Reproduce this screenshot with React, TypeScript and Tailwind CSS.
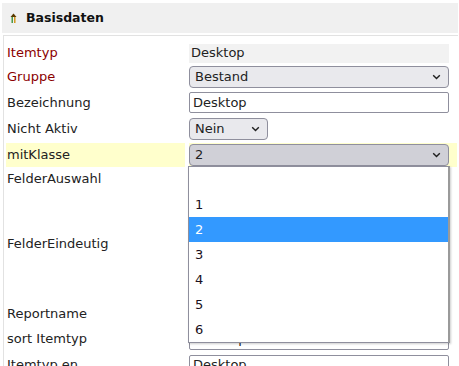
import React from "react";

const labelCls = "pl-[1px] text-[#222]";
const reqCls = "pl-[1px] text-[#8b0000]";

function Chevron() {
  return (
    <svg width="9" height="6" viewBox="0 0 9 6" className="shrink-0">
      <path d="M1.2 1.2l3.3 3.3 3.3-3.3" fill="none" stroke="#1f1f1f" strokeWidth="1.4" />
    </svg>
  );
}

function Select({ value, width, open }: { value: string; width: string; open?: boolean }) {
  return (
    <div
      className={`flex h-[22px] items-center justify-between rounded-[4px] border border-[#8f8f9d] pl-[5px] pr-[7px] ${width} ${
        open ? "bg-[#d0d0d7]" : "bg-[#e9e9ed]"
      }`}
    >
      <span>{value}</span>
      <Chevron />
    </div>
  );
}

function Input({ value }: { value: string }) {
  return (
    <div className="flex h-[21px] w-[260px] items-center rounded-[2px] border border-[#8f8f9d] bg-white pl-[3px]">
      {value}
    </div>
  );
}

const options = ["", "1", "2", "3", "4", "5", "6"];

export default function App() {
  return (
    <div className="relative h-[366px] w-[459px] overflow-hidden bg-white font-['DejaVu_Sans',sans-serif] text-[13px] leading-[16px] text-[#222]">
      <div className="pl-[2px] pr-[1px] pt-[3px]">
        <div className="flex h-[30px] items-center bg-[#f0f0f0] pl-[8px]">
          <svg width="7" height="10" viewBox="0 0 7 10" className="mr-[9px]">
            <path d="M3.5 0.5L0.5 4h6z" fill="#5a3a00" />
            <path d="M2.2 4v6" stroke="#2e8b2e" strokeWidth="1.3" />
            <path d="M4.8 4v6" stroke="#d08a00" strokeWidth="1.3" />
          </svg>
          <span className="text-[12.5px] font-bold text-[#111]">Basisdaten</span>
        </div>

        <div className="ml-px mt-[2px] border-l border-t border-[#e2e2e2] pl-[2px] pt-[6px]">
          <div className="grid grid-cols-[179px_268px] gap-x-[4px] gap-y-[2px]">
            <div className={`flex h-[22px] items-center ${reqCls}`}>Itemtyp</div>
            <div className="flex items-center">
              <div className="flex h-[19px] w-[260px] items-center bg-[#f2f2f2] pl-[2px]">Desktop</div>
            </div>

            <div className={`flex h-[22px] items-center ${reqCls}`}>Gruppe</div>
            <div className="flex items-center">
              <Select value="Bestand" width="w-[260px]" />
            </div>

            <div className={`flex h-[25px] items-center ${labelCls}`}>Bezeichnung</div>
            <div className="flex items-center">
              <Input value="Desktop" />
            </div>

            <div className={`flex h-[24px] items-center ${labelCls}`}>Nicht Aktiv</div>
            <div className="flex items-center">
              <Select value="Nein" width="w-[79px]" />
            </div>

            <div className={`flex h-[24px] items-center bg-[#ffffcc] ${labelCls}`}>mitKlasse</div>
            <div className="relative flex items-center bg-[#ffffcc]">
              <Select value="2" width="w-[260px]" open />
              <div className="absolute left-[-1px] top-[23px] z-10 w-[262px] border border-[#8f8f9d] border-r-2 border-r-[#9a9a9a] bg-white shadow-[1px_1px_2px_rgba(0,0,0,0.2)]">
                {options.map((o) => (
                  <div
                    key={o || "empty"}
                    className={`flex h-[25px] items-center pl-[6px] ${
                      o === "2" ? "bg-[#3399ff] text-white" : "text-[#1a1020]"
                    }`}
                  >
                    {o}
                  </div>
                ))}
              </div>
            </div>

            <div className={`h-[63px] pt-[2px] ${labelCls}`}>FelderAuswahl</div>
            <div>
              <div className="h-[60px] w-[260px] border border-[#8f8f9d] bg-white" />
            </div>

            <div className={`h-[67px] pt-[2px] ${labelCls}`}>FelderEindeutig</div>
            <div>
              <div className="h-[64px] w-[260px] border border-[#8f8f9d] bg-white" />
            </div>

            <div className={`flex h-[22px] items-center ${labelCls}`}>Reportname</div>
            <div className="flex items-center">
              <Input value="" />
            </div>

            <div className={`flex h-[24px] items-center ${labelCls}`}>sort Itemtyp</div>
            <div className="flex items-center">
              <Input value="Desktop" />
            </div>

            <div className={`flex h-[24px] items-center ${labelCls}`}>Itemtyp en</div>
            <div className="flex items-center">
              <Input value="Desktop" />
            </div>
          </div>
        </div>
      </div>
    </div>
  );
}
